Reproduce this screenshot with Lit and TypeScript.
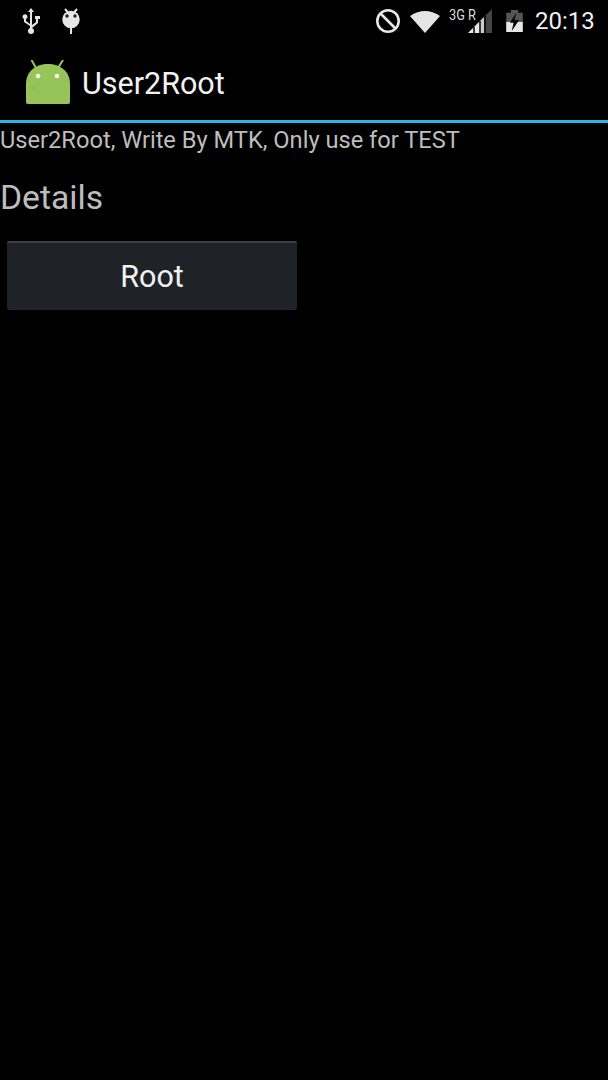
import { LitElement, html, css } from "lit";
import { customElement } from "lit/decorators.js";

@customElement("app-root")
export class AppRoot extends LitElement {
  static styles = css`
    :host { display: block; width: 608px; height: 1080px; background: #000; font-family: Roboto, sans-serif; overflow: hidden; }
    .status { height: 42px; display: flex; align-items: center; color: #e6e6e6; }
    .status svg { display: block; flex: none; }
    .usb { margin-left: 21px; }
    .bug { margin-left: 19px; }
    .spacer { flex: 1; }
    .block { margin-right: 9px; }
    .wifi { margin-right: 9px; }
    .net { font-size: 15px; line-height: 16px; width: 30px; margin-top: -13px; white-space: nowrap; color: #ddd; transform: scaleX(.85); transform-origin: left; }
    .signal { margin-left: -11px; margin-right: 14px; }
    .batt { margin-right: 12px; }
    .time { font-size: 24px; font-weight: 400; width: 59px; margin-right: 14px; color: #f0f0f0; white-space: nowrap; }
    .bar { height: 78px; display: flex; align-items: center; padding-left: 26px; }
    .logo { margin-top: 2px; flex: none; }
    .title { margin-left: 12px; padding-top: 4px; font-size: 30.5px; color: #f2f2f2; }
    .line { height: 3px; background: #2fb4e4; }
    .sub { font-size: 23.65px; line-height: 32px; padding-top: 1px; color: #bdbdbd; }
    .details { font-size: 33.7px; line-height: 40px; margin-top: 22px; color: #bdbdbd; }
    .btn { width: 290px; height: 69px; margin: 23px 0 0 7px; box-sizing: border-box; background: #1f2327; border: 0; border-top: 2px solid #3a3f42; border-radius: 2px; color: #f2f2f2; font: 400 30.5px Roboto, sans-serif; padding: 0; display: block; }
  `;
  render() {
    return html`
      <div class="status">
        <svg class="usb" width="20" height="28" viewBox="0 0 20 28" fill="#e6e6e6">
          <path d="M10 1l3 4h-2v13l4-3v-3h-1V9h5v3h-2v4l-6 5v1h-2v-3l-6-4v-3a2.500 2.500 0 1 1 2 0v2l4 3V5H7z"/>
          <circle cx="10" cy="24" r="3"/>
        </svg>
        <svg class="bug" width="22" height="28" viewBox="0 0 22 28">
          <path d="M5 2l3 3.500M17 2l-3 3.500" stroke="#e6e6e6" stroke-width="2"/>
          <circle cx="11" cy="12.500" r="8.700" fill="#e6e6e6"/>
          <circle cx="7" cy="9" r="1.700" fill="#222"/><circle cx="15" cy="9" r="1.700" fill="#222"/>
          <rect x="10" y="21" width="2" height="6" fill="#e6e6e6"/>
        </svg>
        <div class="spacer"></div>
        <svg class="block" width="26" height="26" viewBox="0 0 26 26" fill="none" stroke="#e6e6e6" stroke-width="2.600">
          <circle cx="13" cy="13" r="10.700"/><path d="M5.500 5.500l15 15"/>
        </svg>
        <svg class="wifi" width="30" height="24" viewBox="0 0 30 24"><path d="M0 7Q15-3 30 7L15 24z" fill="#e6e6e6"/></svg>
        <span class="net">3G R</span>
        <svg class="signal" width="24" height="24" viewBox="0 0 24 24">
          <path d="M0 24L24 0v24z" fill="#444"/>
          <path d="M0 24L12 12v12z" fill="#e6e6e6"/>
          <path d="M12 12l4-4v16h-4z" fill="#ccc"/>
          <path d="M6 18v6M12 12v12M17 7v17" stroke="#000" stroke-width="1.500"/>
        </svg>
        <svg class="batt" width="17" height="22" viewBox="0 0 18 24">
          <path d="M5 0h8v3h5v21H0V3h5z" fill="#555"/>
          <path d="M0 13h18v11H0z" fill="#e6e6e6"/>
          <path d="M11 3L4 14h4l-2 9 8-12H9z" fill="#000"/>
        </svg>
        <span class="time">20:13</span>
      </div>
      <div class="bar">
        <svg class="logo" width="44" height="44" viewBox="0 0 44 44">
          <path d="M5.500 0l4.500 8M37 0l-5 8" stroke="#97c459" stroke-width="2"/>
          <path d="M0 24C0 11 10 4 22 4s22 7 22 20v18a2 2 0 0 1-2 2H2a2 2 0 0 1-2-2z" fill="#97c459"/>
          <circle cx="12" cy="16" r="2.300" fill="#f4f7ec"/><circle cx="31" cy="16" r="2.300" fill="#f4f7ec"/>
          <path d="M3.500 28h9" stroke="#7a9c4a" stroke-width=".8" stroke-dasharray="1 2"/>
        </svg>
        <span class="title">User2Root</span>
      </div>
      <div class="line"></div>
      <div class="sub">User2Root, Write By MTK, Only use for TEST</div>
      <div class="details">Details</div>
      <button class="btn">Root</button>
    `;
  }
}
